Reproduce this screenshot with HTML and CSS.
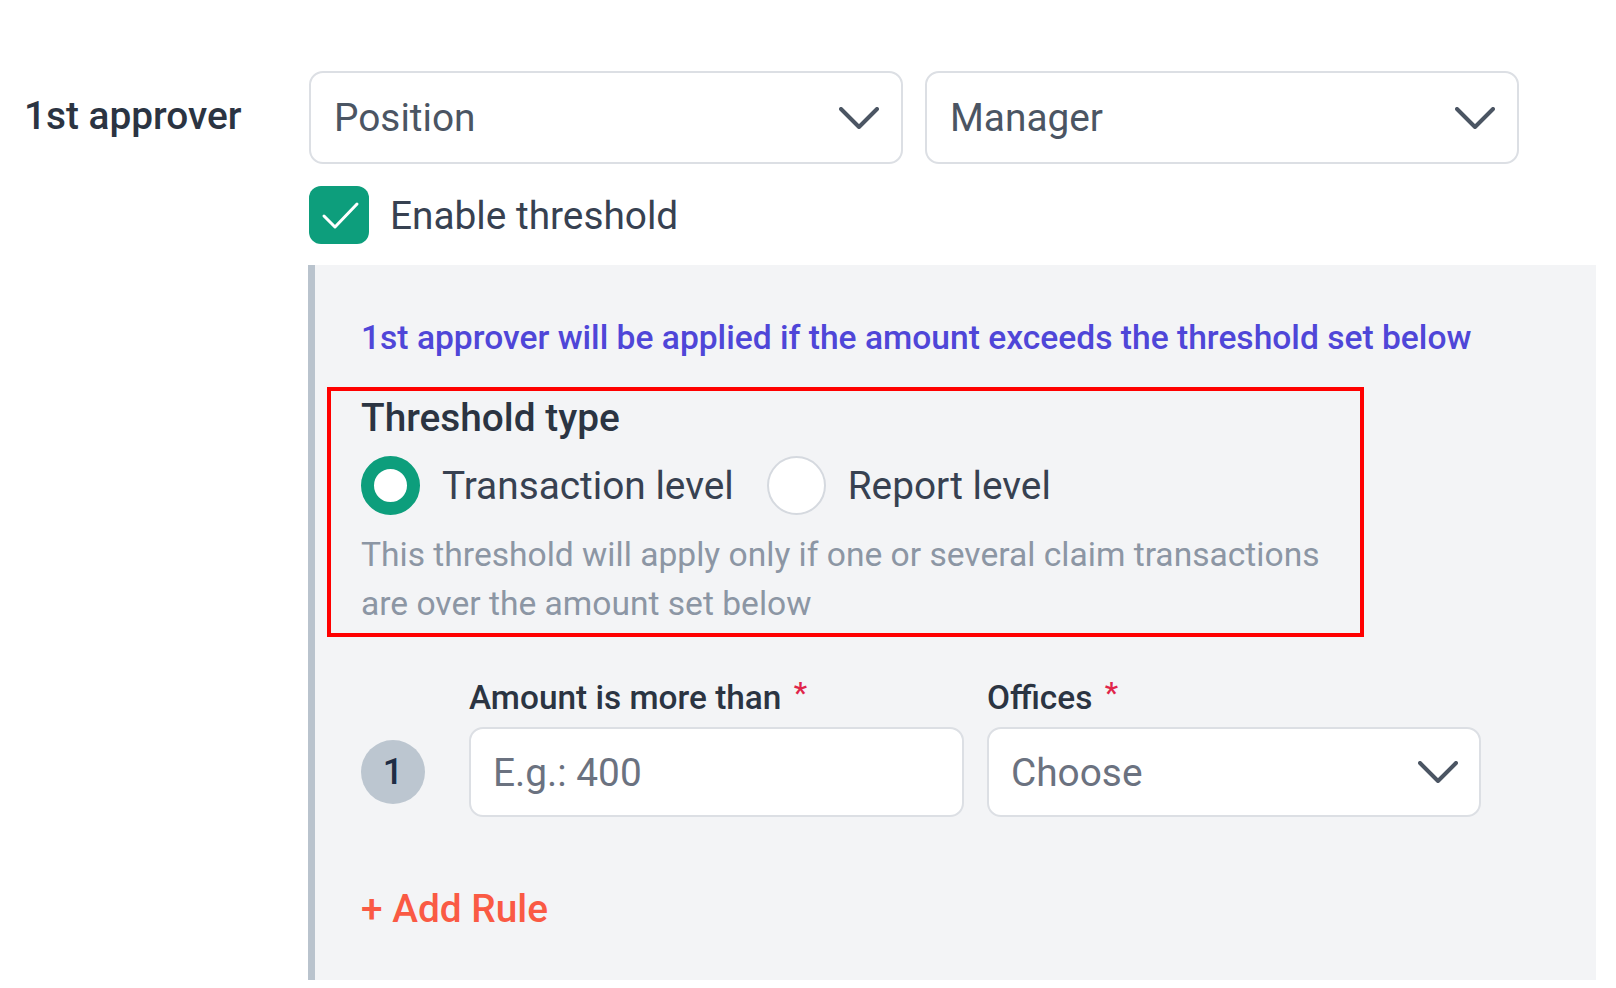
FILE: index.html
```html
<!DOCTYPE html>
<html lang="en">
<head>
<meta charset="utf-8">
<title>Approver threshold</title>
<link rel="stylesheet" href="styles.css">
</head>
<body>
<div class="page">
  <div class="approver-label">1st approver</div>
  <div class="content">
    <div class="selects">
      <div class="select">
        <span class="select-value">Position</span>
        <svg class="chevron" width="40" height="22" viewBox="0 0 40 22"><polyline points="2,2 20,20 38,2" fill="none" stroke="#4b5563" stroke-width="4" stroke-linecap="round" stroke-linejoin="round"/></svg>
      </div>
      <div class="select">
        <span class="select-value">Manager</span>
        <svg class="chevron" width="40" height="22" viewBox="0 0 40 22"><polyline points="2,2 20,20 38,2" fill="none" stroke="#4b5563" stroke-width="4" stroke-linecap="round" stroke-linejoin="round"/></svg>
      </div>
    </div>
    <div class="checkbox-row">
      <span class="checkbox">
        <svg width="60" height="58" viewBox="0 0 60 58"><path d="M15 30 L26 41 L48 18" fill="none" stroke="#fff" stroke-width="3" stroke-linecap="round" stroke-linejoin="round"/></svg>
      </span>
      <span class="checkbox-label">Enable threshold</span>
    </div>
    <div class="panel">
      <div class="info">1st approver will be applied if the amount exceeds the threshold set below</div>
      <div class="threshold-box">
        <div class="section-title">Threshold type</div>
        <div class="radios">
          <span class="radio radio-on"></span>
          <span class="radio-label">Transaction level</span>
          <span class="radio radio-off"></span>
          <span class="radio-label">Report level</span>
        </div>
        <div class="hint">This threshold will apply only if one or several claim transactions<br>are over the amount set below</div>
      </div>
      <div class="rule">
        <span class="rule-num">1</span>
        <div class="field field-amount">
          <div class="field-label">Amount is more than <span class="req">*</span></div>
          <div class="input"><span class="placeholder">E.g.: 400</span></div>
        </div>
        <div class="field field-offices">
          <div class="field-label">Offices <span class="req">*</span></div>
          <div class="input">
            <span class="placeholder">Choose</span>
            <svg class="chevron" width="40" height="22" viewBox="0 0 40 22"><polyline points="2,2 20,20 38,2" fill="none" stroke="#4b5563" stroke-width="4" stroke-linecap="round" stroke-linejoin="round"/></svg>
          </div>
        </div>
      </div>
      <div class="add-rule">+ Add Rule</div>
    </div>
  </div>
</div>
</body>
</html>
```

FILE: styles.css
```css
* { box-sizing: border-box; }

html, body {
  margin: 0;
  padding: 0;
  background: #ffffff;
}

body {
  font-family: Roboto, "Liberation Sans", Arial, sans-serif;
  color: #374151;
}

.page {
  display: flex;
  padding: 71px 0 0 24px;
}

.approver-label {
  width: 285px;
  flex: none;
  font-size: 38.8px;
  font-weight: 500;
  color: #2b3442;
  height: 93px;
  line-height: 90px;
}

.content {
  flex: none;
  width: 1287px;
}

.selects {
  display: flex;
  gap: 22px;
}

.select {
  width: 594px;
  height: 93px;
  border: 2px solid #dcdfe4;
  border-radius: 14px;
  background: #fff;
  display: flex;
  align-items: center;
  justify-content: space-between;
  padding: 0 22px 0 23px;
}

.select-value {
  font-size: 38.8px;
  color: #4b5563;
}

.chevron { flex: none; display: block; }

.checkbox-row {
  display: flex;
  align-items: center;
  gap: 21px;
  margin-top: 22px;
}

.checkbox {
  width: 60px;
  height: 58px;
  border-radius: 12px;
  background: #0d9e7c;
  display: block;
}

.checkbox svg { display: block; }

.checkbox-label {
  font-size: 38.8px;
  color: #374151;
}

.panel {
  margin-top: 21px;
  margin-left: -1px;
  background: #f3f4f6;
  border-left: 7px solid #b9c3cd;
  padding: 53px 0 48px 46px;
}

.info {
  font-size: 33.6px;
  font-weight: 500;
  color: #4f46d8;
  line-height: 40px;
}

.threshold-box {
  margin-top: 29px;
  margin-left: -34px;
  width: 1037px;
  border: 4px solid #ff0000;
  padding: 4px 0 5px 30px;
}

.section-title {
  font-size: 38.8px;
  font-weight: 500;
  color: #2b3442;
  line-height: 46px;
}

.radios {
  display: flex;
  align-items: center;
  margin-top: 15px;
}

.radio {
  width: 59px;
  height: 59px;
  border-radius: 50%;
  display: block;
  flex: none;
  background: #fff;
}

.radio-on {
  border: 13px solid #0d9e7c;
}

.radio-off {
  border: 2px solid #d5d9df;
  margin-left: 33px;
}

.radio-label {
  font-size: 38.8px;
  color: #374151;
  margin-left: 22px;
}

.hint {
  margin-top: 15px;
  font-size: 33.6px;
  line-height: 49px;
  color: #8c96a4;
}

.rule {
  display: flex;
  align-items: flex-end;
  margin-top: 36px;
}

.rule-num {
  width: 64px;
  height: 64px;
  border-radius: 50%;
  background: #bcc6d0;
  color: #1f2d44;
  font-size: 36px;
  font-weight: 500;
  display: flex;
  align-items: center;
  justify-content: center;
  margin-bottom: 13px;
  flex: none;
}

.field-amount { margin-left: 44px; width: 495px; }
.field-offices { margin-left: 23px; width: 494px; }

.field-label {
  font-size: 33.4px;
  font-weight: 500;
  color: #2b3442;
  line-height: 40px;
  margin-bottom: 9px;
}

.req {
  color: #e0254a;
  font-size: 30px;
  vertical-align: 6px;
  margin-left: 4px;
}

.input {
  height: 90px;
  border: 2px solid #dcdfe4;
  border-radius: 14px;
  background: #fff;
  display: flex;
  align-items: center;
  justify-content: space-between;
  padding: 0 21px 0 22px;
}

.placeholder {
  font-size: 38.8px;
  color: #6b7280;
}

.add-rule {
  margin-top: 69px;
  font-size: 38.8px;
  font-weight: 500;
  color: #fa5a44;
  line-height: 46px;
}
```
